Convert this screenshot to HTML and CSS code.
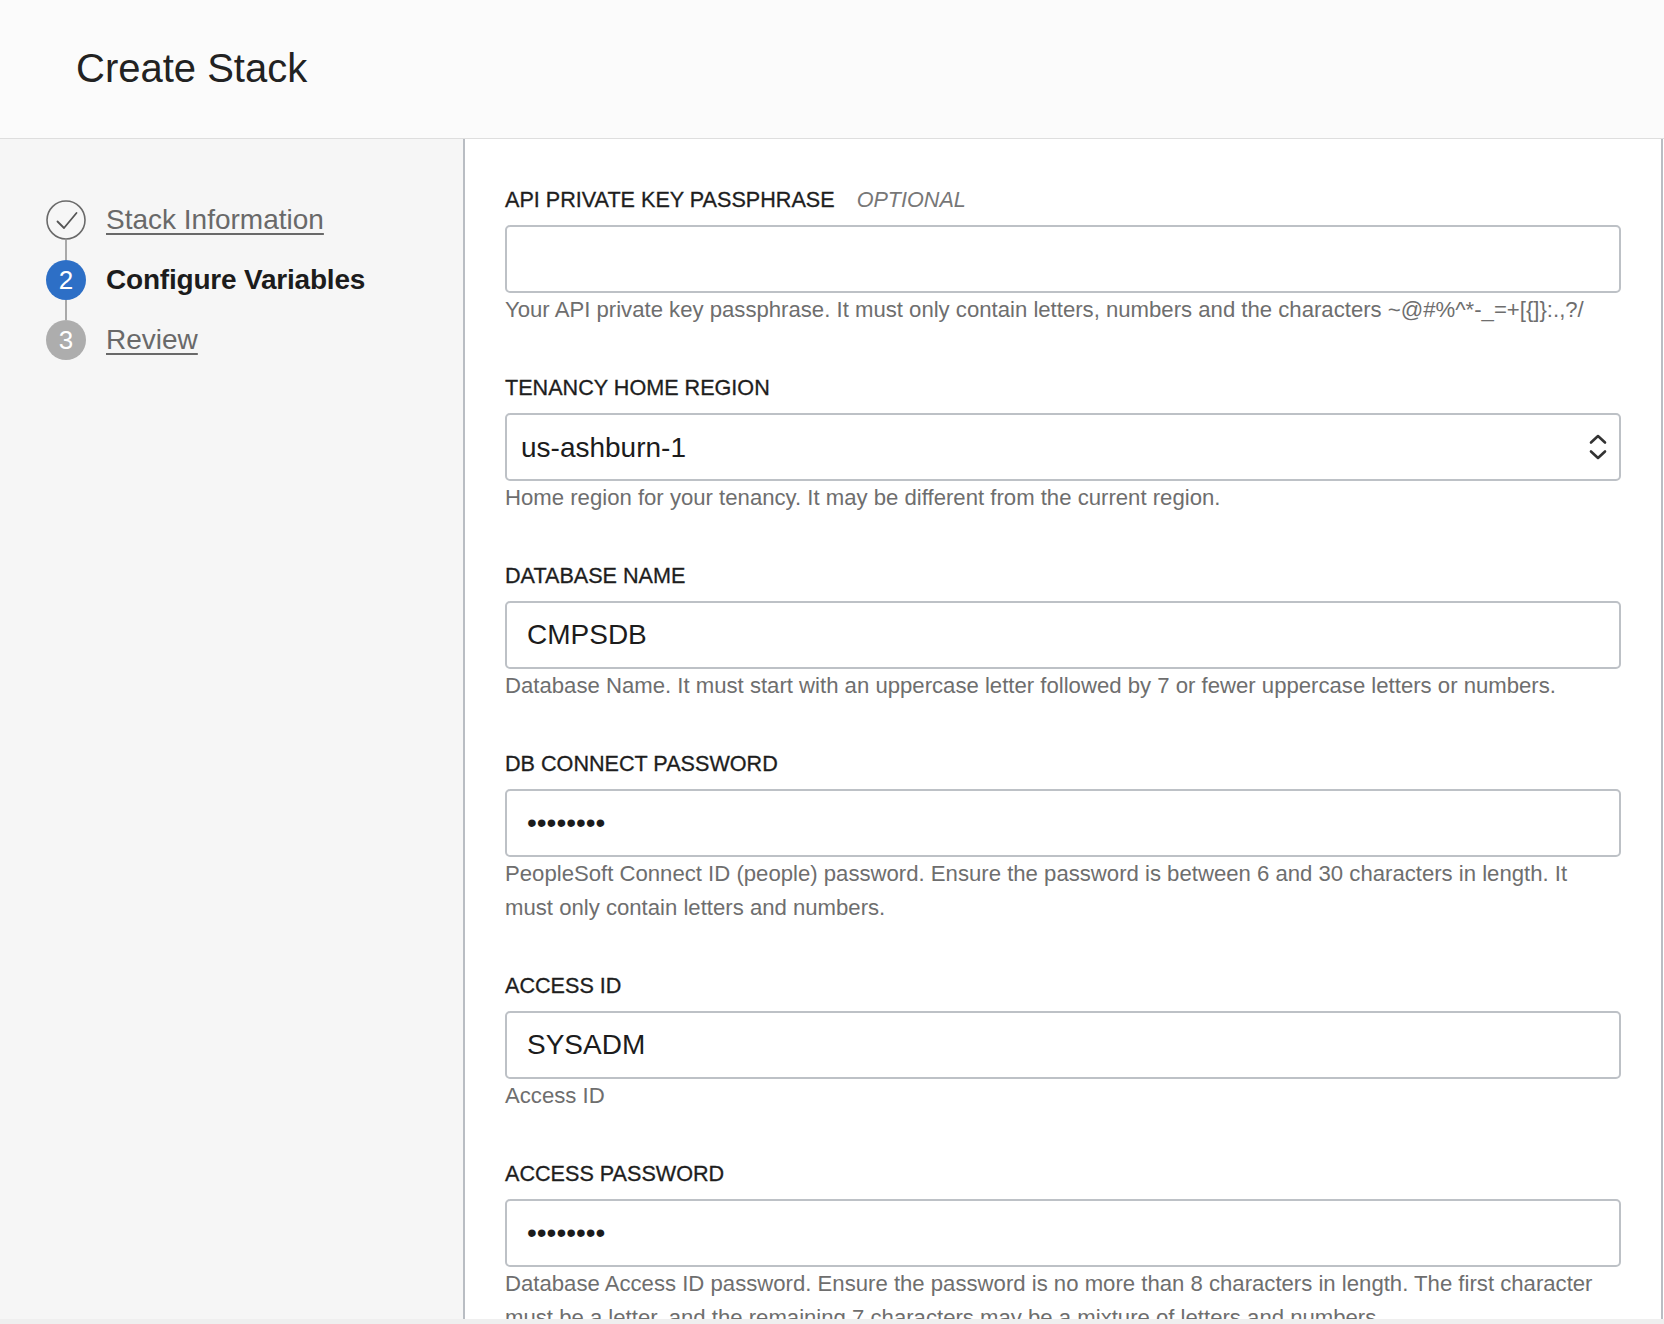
FILE: index.html
```html
<!DOCTYPE html>
<html lang="en">
<head>
<meta charset="utf-8">
<title>Create Stack</title>
<link rel="stylesheet" href="styles.css">
</head>
<body>
<div class="page">
  <header class="page-header">
    <h1 class="page-title">Create Stack</h1>
  </header>
  <div class="layout">
    <nav class="sidebar">
      <div class="step">
        <span class="step-icon step-done">
          <svg width="40" height="40" viewBox="0 0 40 40"><circle cx="20" cy="20" r="19" fill="none" stroke="#6a6a6a" stroke-width="1.6"/><path d="M11.5 21.5 L18 28 L30.5 13" fill="none" stroke="#555" stroke-width="1.8" stroke-linecap="round" stroke-linejoin="round"/></svg>
        </span>
        <a class="step-link" href="#">Stack Information</a>
      </div>
      <div class="step-connector"></div>
      <div class="step">
        <span class="step-icon step-current">2</span>
        <span class="step-text-current">Configure Variables</span>
      </div>
      <div class="step-connector"></div>
      <div class="step">
        <span class="step-icon step-todo">3</span>
        <a class="step-link" href="#">Review</a>
      </div>
    </nav>
    <main class="main">
      <div class="field">
        <label class="field-label">API PRIVATE KEY PASSPHRASE <span class="optional">OPTIONAL</span></label>
        <input class="text-input" type="password" value="">
        <p class="help">Your API private key passphrase. It must only contain letters, numbers and the characters ~@#%^*-_=+[{]}:.,?/</p>
      </div>
      <div class="field">
        <label class="field-label">TENANCY HOME REGION</label>
        <div class="select-wrap">
          <select class="select-input">
            <option>us-ashburn-1</option>
          </select>
          <svg class="select-arrows" width="20" height="30" viewBox="0 0 20 30"><path d="M3 10.5 L10 4 L17 10.5" fill="none" stroke="#333" stroke-width="2.6" stroke-linecap="round" stroke-linejoin="round"/><path d="M3 19.5 L10 26 L17 19.5" fill="none" stroke="#333" stroke-width="2.6" stroke-linecap="round" stroke-linejoin="round"/></svg>
        </div>
        <p class="help">Home region for your tenancy. It may be different from the current region.</p>
      </div>
      <div class="field">
        <label class="field-label">DATABASE NAME</label>
        <input class="text-input" type="text" value="CMPSDB">
        <p class="help">Database Name. It must start with an uppercase letter followed by 7 or fewer uppercase letters or numbers.</p>
      </div>
      <div class="field">
        <label class="field-label">DB CONNECT PASSWORD</label>
        <input class="text-input" type="password" value="peop1e12">
        <p class="help">PeopleSoft Connect ID (people) password. Ensure the password is between 6 and 30 characters in length. It must only contain letters and numbers.</p>
      </div>
      <div class="field">
        <label class="field-label">ACCESS ID</label>
        <input class="text-input" type="text" value="SYSADM">
        <p class="help">Access ID</p>
      </div>
      <div class="field">
        <label class="field-label">ACCESS PASSWORD</label>
        <input class="text-input" type="password" value="SYSADM12">
        <p class="help">Database Access ID password. Ensure the password is no more than 8 characters in length. The first character must be a letter, and the remaining 7 characters may be a mixture of letters and numbers.</p>
      </div>
    </main>
  </div>
  <div class="bottom-strip"></div>
</div>
</body>
</html>
```
FILE: styles.css
```css
* { box-sizing: border-box; }

html, body {
  margin: 0;
  padding: 0;
  background: #ffffff;
}

body {
  font-family: "Liberation Sans", Arial, Helvetica, sans-serif;
  color: #1f1f1f;
  width: 1664px;
  height: 1324px;
  overflow: hidden;
}

.page {
  display: flex;
  flex-direction: column;
  height: 1324px;
}

.page-header {
  height: 139px;
  flex: none;
  background: #fbfbfb;
  border-bottom: 1px solid #dedede;
  display: flex;
  align-items: center;
  padding-left: 76px;
}

.page-title {
  margin: 0;
  font-size: 40px;
  font-weight: 400;
  color: #222222;
  line-height: 48px;
  padding-bottom: 2px;
}

.layout {
  display: flex;
  height: 1180px;
  flex: none;
  overflow: hidden;
}

.sidebar {
  width: 465px;
  flex: none;
  background: #f6f6f6;
  border-right: 2px solid #b9bdc3;
  padding: 61px 0 0 46px;
  display: flex;
  flex-direction: column;
}

.step {
  display: flex;
  align-items: center;
  height: 40px;
}

.step-icon {
  width: 40px;
  height: 40px;
  flex: none;
  border-radius: 50%;
  display: flex;
  align-items: center;
  justify-content: center;
  font-size: 26px;
  color: #ffffff;
  margin-right: 20px;
}

.step-icon svg { display: block; }

.step-current { background: #2d6fc6; }
.step-todo { background: #adadad; }

.step-connector {
  width: 2px;
  height: 20px;
  background: #a9a9a9;
  margin-left: 19px;
}

.step-link {
  font-size: 28px;
  color: #696969;
  text-decoration: underline;
  text-decoration-thickness: 2px;
  text-underline-offset: 4px;
}

.step-text-current {
  font-size: 28px;
  font-weight: 700;
  color: #1c1c1c;
  letter-spacing: -0.2px;
}

.main {
  flex: 1;
  background: #ffffff;
  border-right: 2px solid #b9bdc3;
  margin-right: 1px;
  padding: 44px 40px 0 40px;
  display: flex;
  flex-direction: column;
  gap: 44px;
}

.field {
  display: flex;
  flex-direction: column;
}

.field-label {
  font-size: 21.6px;
  line-height: 34px;
  color: #1e1e1e;
  -webkit-text-stroke: 0.3px #1e1e1e;
  margin-bottom: 8px;
}

.optional {
  font-style: italic;
  color: #777777;
  -webkit-text-stroke: 0;
  margin-left: 16px;
}

.text-input,
.select-input {
  width: 100%;
  height: 68px;
  border: 2px solid #bdc1c6;
  border-radius: 5px;
  background: #ffffff;
  font-family: "Liberation Sans", Arial, Helvetica, sans-serif;
  font-size: 28px;
  color: #1c1c1c;
  outline: none;
  margin: 0;
}

.text-input {
  padding: 0 20px;
}

.select-wrap {
  position: relative;
}

.select-input {
  -webkit-appearance: none;
  appearance: none;
  padding: 0 50px 0 14px;
  display: block;
}

.select-arrows {
  position: absolute;
  right: 13px;
  top: 19px;
  pointer-events: none;
}

.help {
  margin: 0;
  font-size: 22.15px;
  line-height: 34px;
  color: #6e6e6e;
  padding-right: 14px;
}

.bottom-strip {
  flex: 1;
  background: #efefef;
}
```
